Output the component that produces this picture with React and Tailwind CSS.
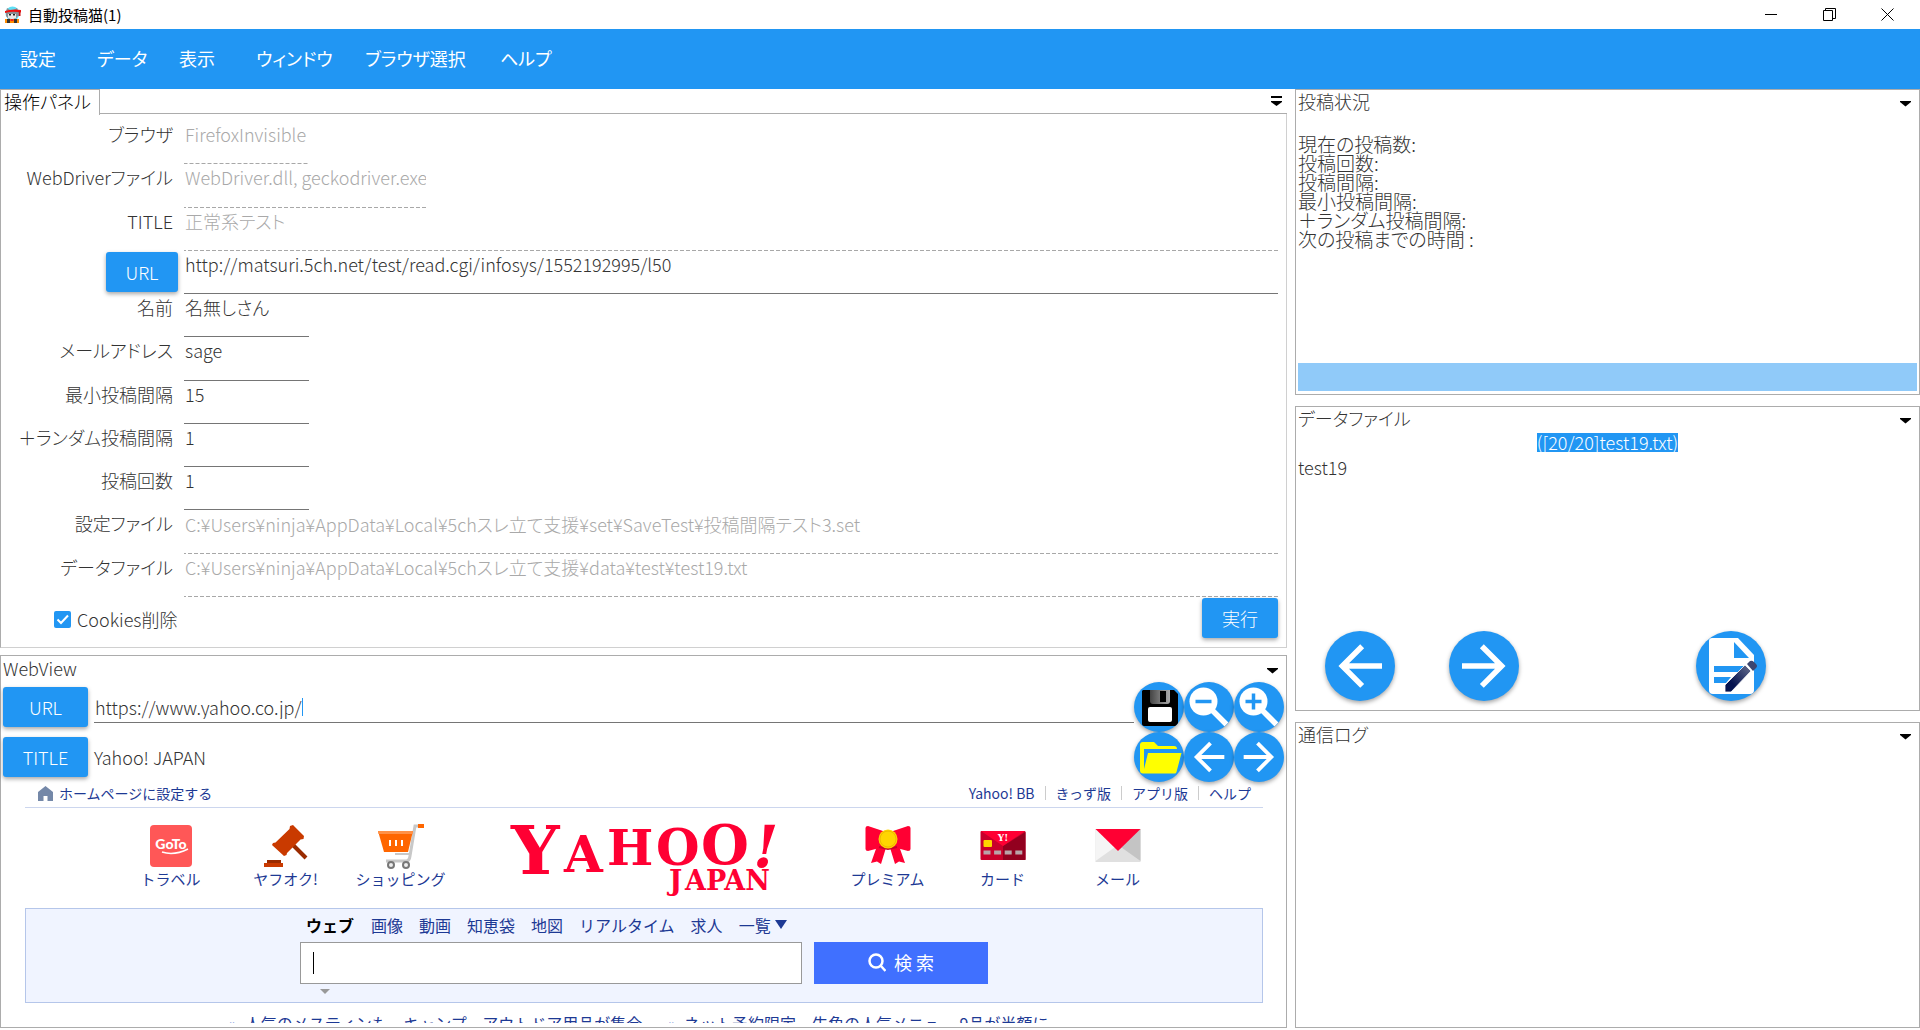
import React from 'react';

const blueShadow = 'shadow-[0_2px_4px_rgba(0,0,0,0.35)]';

function CatIcon() {
  return (
    <svg width="18" height="18" viewBox="0 0 18 18" aria-hidden="true">
      <circle cx="8.500" cy="7.500" r="7" fill="#5fdff5" />
      <path d="M2 6l1-4 3 2h4l3-2 1 4v4l-3 3H5l-3-3z" fill="#8a8f94" />
      <path d="M4 8h8v4l-3 1H7l-3-1z" fill="#e8e8e8" />
      <path d="M1 5Q8 2.500 17 4v2.500Q8 5 1 7z" fill="#ee1111" />
      <path d="M15.500 5v5" stroke="#cc1111" strokeWidth="2" />
      <rect x="5" y="8" width="2" height="1.500" fill="#222" />
      <rect x="9" y="8" width="2" height="1.500" fill="#222" />
      <rect x="1" y="13" width="14" height="4" fill="#ff8c00" />
      <rect x="3" y="13" width="3" height="4" fill="#333" />
      <rect x="10" y="13" width="3" height="4" fill="#333" />
      <rect x="6.500" y="13" width="3" height="2" fill="#e22" />
    </svg>
  );
}

function TitleBar() {
  const btn = 'flex h-full w-[58px] items-center justify-center';
  return (
    <header className="flex h-[29px] shrink-0 items-center pl-1 pr-1">
      <CatIcon />
      <h1 className="ml-[6px] text-[15px] leading-5 text-black">自動投稿猫(1)</h1>
      <div className="ml-auto flex h-full">
        <button className={btn} aria-label="最小化">
          <svg width="12" height="12"><path d="M0 5.500h12" stroke="#000" /></svg>
        </button>
        <button className={btn} aria-label="元に戻す">
          <svg width="13" height="13" fill="none" stroke="#000">
            <path d="M.5 2.500h9v10h-9zM2.500 2.500v-2h10v10h-3" />
          </svg>
        </button>
        <button className={btn} aria-label="閉じる">
          <svg width="13" height="13" stroke="#000"><path d="M.5.5l12 12M12.500.5l-12 12" /></svg>
        </button>
      </div>
    </header>
  );
}

function MenuBar() {
  return (
    <nav className="grid h-[60px] shrink-0 grid-cols-[77px_82px_77px_109px_135px_auto] content-center justify-items-start bg-[#2196f3] pb-[2px] pl-5 text-[18px] leading-7 text-white">
      {['設定', 'データ', '表示', 'ウィンドウ', 'ブラウザ選択', 'ヘルプ'].map((m) => (
        <button key={m}>{m}</button>
      ))}
    </nav>
  );
}

function Caret({ bar }) {
  return (
    <button aria-label="パネルメニュー" className="flex h-4 w-4 items-center justify-center">
      <svg width="11" height="10" fill="#000">
        {bar ? <path d="M0 0h11v2H0zM0 5h11v1L5.500 10 0 6z" /> : <path d="M0 3h11v1L5.500 8.500 0 4z" />}
      </svg>
    </button>
  );
}

const dashed =
  'bg-[linear-gradient(to_right,#a8a8a8_4px,transparent_4px)] bg-[length:6px_1px] bg-bottom bg-repeat-x text-[#a9a9a9] border-b border-transparent bg-origin-border bg-clip-border';
const solid = 'border-b border-[#757575] text-[#333]';

const fields = [
  { id: 'browser', label: 'ブラウザ', value: 'FirefoxInvisible', width: 'w-[125px]', ro: true },
  { id: 'driver', label: 'WebDriverファイル', value: 'WebDriver.dll, geckodriver.exe', width: 'w-[242px]', ro: true },
  { id: 'title', label: 'TITLE', value: '正常系テスト', width: 'w-full', ro: true },
  { id: 'url', label: 'URL', value: 'http://matsuri.5ch.net/test/read.cgi/infosys/1552192995/l50', width: 'w-full', button: true },
  { id: 'name', label: '名前', value: '名無しさん', width: 'w-[125px]' },
  { id: 'mail', label: 'メールアドレス', value: 'sage', width: 'w-[125px]' },
  { id: 'min', label: '最小投稿間隔', value: '15', width: 'w-[125px]' },
  { id: 'rand', label: '＋ランダム投稿間隔', value: '1', width: 'w-[125px]' },
  { id: 'count', label: '投稿回数', value: '1', width: 'w-[125px]' },
  { id: 'set', label: '設定ファイル', value: 'C:¥Users¥ninja¥AppData¥Local¥5chスレ立て支援¥set¥SaveTest¥投稿間隔テスト3.set', width: 'w-full', ro: true },
  { id: 'data', label: 'データファイル', value: 'C:¥Users¥ninja¥AppData¥Local¥5chスレ立て支援¥data¥test¥test19.txt', width: 'w-full', ro: true },
];

function ControlPanel() {
  return (
    <section className="flex min-h-0 flex-[559_1_0%] flex-col">
      <div className="flex h-[25px] shrink-0 items-stretch">
        <h2 className="z-10 -mb-px w-[100px] whitespace-nowrap border border-b-0 border-[#acacac] bg-white pl-[3px] text-[18px] font-light leading-[22px] text-black">操作パネル</h2>
        <div className="flex flex-1 items-center justify-end border-b border-[#acacac] pr-[3px]">
          <Caret bar />
        </div>
      </div>
      <div className="flex min-h-0 flex-1 flex-col border border-t-0 border-[#acacac] border-b-[#d0d0d0] border-r-[#d0d0d0] pt-[7px]">
        <div className="grid min-h-0 flex-1 auto-rows-fr grid-cols-[172px_1fr] gap-x-[11px] pr-2">
          {fields.map((f) => (
            <React.Fragment key={f.id}>
              {f.button ? (
                <div className="flex items-center justify-end">
                  <button className={`-mr-[5px] h-10 w-[72px] rounded-[3px] bg-[#2196f3] text-white ${blueShadow}`}>{f.label}</button>
                </div>
              ) : (
                <label htmlFor={f.id} className="whitespace-nowrap text-right leading-[26px]">{f.label}</label>
              )}
              <input
                id={f.id}
                aria-label={f.label}
                defaultValue={f.value}
                readOnly={f.ro}
                className={`h-full min-h-0 rounded-none pb-4 pl-px outline-none ${f.width} ${f.ro ? dashed : solid}`}
              />
            </React.Fragment>
          ))}
        </div>
        <div className="flex h-[50px] shrink-0 items-start justify-between pl-[53px] pr-2">
          <label className="flex h-11 items-center gap-[6px]">
            <span className="relative flex h-[17px] w-[17px]">
              <input type="checkbox" defaultChecked className="h-[17px] w-[17px] appearance-none rounded-[2px] bg-[#2196f3]" />
              <svg className="pointer-events-none absolute inset-0" width="17" height="17" fill="none" stroke="#fff" strokeWidth="2"><path d="M3.500 8.500l3.500 3.500 7-7.500" /></svg>
            </span>
            Cookies削除
          </label>
          <button className={`mt-px h-10 w-[76px] rounded-[3px] bg-[#2196f3] text-white ${blueShadow}`}>実行</button>
        </div>
      </div>
    </section>
  );
}

function Arrow({ left, size }) {
  return (
    <svg width={size} height={size} viewBox="0 0 24 24" fill="#fff" aria-hidden="true">
      {left ? (
        <path d="M20 11v2H8l5.500 5.500-1.420 1.420L4.160 12l7.920-7.920L13.500 5.500 8 11z" />
      ) : (
        <path d="M4 11v2h12l-5.500 5.500 1.420 1.420L19.840 12l-7.920-7.920L10.500 5.500 16 11z" />
      )}
    </svg>
  );
}

function Magnifier({ plus }) {
  return (
    <svg width="50" height="50" viewBox="0 0 50 50" aria-hidden="true">
      <path d="M27 27l15.500 15.500" stroke="#fff" strokeWidth="5.500" />
      <circle cx="19.500" cy="19.500" r="14" fill="#fff" />
      <path d="M11.500 19.500h16" stroke="#2196f3" strokeWidth="3.500" />
      {plus && <path d="M19.500 11.500v16" stroke="#2196f3" strokeWidth="3.500" />}
    </svg>
  );
}

function Floppy() {
  return (
    <svg width="50" height="50" viewBox="0 0 50 50" aria-hidden="true">
      <defs>
        <linearGradient id="shutter"><stop offset="0" stopColor="#444" /><stop offset="1" stopColor="#aaa" /></linearGradient>
      </defs>
      <path d="M9 8h31l4 4v30a2 2 0 0 1-2 2H10a2 2 0 0 1-2-2V9z" fill="#000" />
      <path d="M16 8h20v11a3 3 0 0 1-3 3H19a3 3 0 0 1-3-3z" fill="url(#shutter)" />
      <rect x="26" y="9" width="6" height="11" fill="#000" />
      <rect x="14" y="25" width="24" height="15" rx="2" fill="#fff" />
    </svg>
  );
}

function Folder() {
  return (
    <svg width="50" height="50" viewBox="0 0 50 50" fill="#ff0" aria-hidden="true">
      <path d="M6 13a3 3 0 0 1 3-3h11l4 4h16a3 3 0 0 1 3 3H10v20L14 21h33.500l-5 19a2 2 0 0 1-2 1.500H9a3 3 0 0 1-3-3z" />
    </svg>
  );
}

function RoundButton({ label, children, big }) {
  return (
    <button aria-label={label} className={`flex items-center justify-center overflow-hidden rounded-full bg-[#2196f3] ${blueShadow} ${big ? 'h-[70px] w-[70px]' : 'h-[50px] w-[50px]'}`}>
      {children}
    </button>
  );
}

function TravelIcon() {
  return (
    <svg width="46" height="46" viewBox="0 0 46 46" aria-hidden="true">
      <rect x="2" y="2" width="42" height="42" rx="4" fill="#ff5757" />
      <text x="23" y="26" textAnchor="middle" fontFamily="Lato, sans-serif" fontWeight="900" fontSize="14" fill="#fff">GoTo</text>
      <path d="M14 29q12 4 26-3" fill="none" stroke="#fff" strokeWidth="1.500" />
    </svg>
  );
}

function GavelIcon() {
  return (
    <svg width="46" height="46" viewBox="0 0 46 46" aria-hidden="true">
      <path d="M27 19l16 16" stroke="#9a2b00" strokeWidth="4" />
      <path d="M10 20l2.500-.5L26.500 6l.5-3L30 2l11 11-.5 3-3 .5L24 30l-.5 2-2.500 1L9 22z" fill="#c93a00" />
      <path d="M4 37h14v3H4z" fill="#9a2b00" />
      <path d="M1 40h19v4H1z" fill="#c93a00" />
    </svg>
  );
}

function CartIcon() {
  return (
    <svg width="46" height="46" viewBox="0 0 46 46" aria-hidden="true">
      <path d="M45 3h-8L32 33q-.5 5-4 5H8" fill="none" stroke="#c8c8c8" strokeWidth="3" />
      <path d="M17 31h14" stroke="#c8c8c8" strokeWidth="2" />
      <path d="M40 1h6v4h-6z" fill="#ff6600" />
      <path d="M0 8h35l-5 21H6z" fill="#ff6600" />
      <path d="M0 8h35l-.5 3H.5z" fill="#ff9147" />
      <path d="M12 17v6M18 17v6M24 17v6" stroke="#fff" strokeWidth="2" />
      <circle cx="13" cy="42" r="3" fill="#eee" stroke="#777" strokeWidth="2" />
      <circle cx="28" cy="42" r="3" fill="#eee" stroke="#777" strokeWidth="2" />
    </svg>
  );
}

function RibbonIcon() {
  return (
    <svg width="46" height="46" viewBox="0 0 46 46" fill="#ff0033" aria-hidden="true">
      <path d="M12 23h9.500L16 41l-4-2.500L6 40zM34 23h-9.500L30 41l4-2.500 6 1.500z" />
      <path d="M.5 5q0-2 2.500-2l15 5v16L3 28q-2.500 0-2.500-2zM45.500 5q0-2-2.500-2L28 8v16l15 4q2.500 0 2.500-2z" />
      <path d="M14 24l9 2 9-2" fill="none" stroke="#c8002a" strokeWidth="2" />
      <circle cx="23" cy="16" r="9.500" fill="#ffd500" />
      <circle cx="23" cy="16" r="8" fill="none" stroke="#eeb800" />
    </svg>
  );
}

function CardIcon() {
  return (
    <svg width="46" height="46" viewBox="0 0 46 46" aria-hidden="true">
      <rect x=".5" y="8" width="45" height="29" rx="1" fill="#c9002b" />
      <path d="M23 23L45.500 9v28H23z" fill="#92001f" />
      <path d="M1 8h44L23 23z" fill="#ff0033" />
      <text x="23" y="18" textAnchor="middle" fontFamily="DejaVu Serif, serif" fontWeight="700" fontSize="9" fill="#fff">Y!</text>
      <rect x="3.500" y="17" width="8.500" height="7" rx="1" fill="#ffd500" />
      <path d="M3.500 29.500h39" stroke="#b9a3a8" strokeWidth="4" strokeDasharray="7 3.600" />
    </svg>
  );
}

function MailIcon() {
  return (
    <svg width="46" height="46" viewBox="0 0 46 46" aria-hidden="true">
      <rect x=".5" y="6" width="45" height="33" fill="#e0e0e0" />
      <path d="M.5 6v32L23 22z" fill="#f5f5f5" />
      <path d="M45.500 6v32L23 22z" fill="#c4c4c4" />
      <path d="M.5 6h45L23 28z" fill="#ff0033" />
    </svg>
  );
}

function YahooLogo() {
  return (
    <svg width="268" height="74" viewBox="0 0 268 74" className="overflow-visible" fill="#ff0033" fontFamily="DejaVu Serif, serif" fontWeight="700" role="img" aria-label="Yahoo! JAPAN">
      <text y="51" fontSize="68" x="1">Y</text>
      <text y="49" fontSize="50" x="54">A</text>
      <text y="42" fontSize="49" x="97">H</text>
      <text y="42" fontSize="50" x="146">O</text>
      <text y="41" fontSize="55" x="191">O</text>
      <text y="44" fontSize="58" x="243" fontStyle="italic">!</text>
      <text y="67" fontSize="28" x="159">J</text>
      <text y="67" fontSize="27" x="175">APAN</text>
    </svg>
  );
}

function Shortcut({ icon, label }) {
  return (
    <a href="#" className="flex w-[115px] flex-col items-center">
      {icon}
      <span className="text-[15px] leading-5">{label}</span>
    </a>
  );
}

function YahooPage() {
  return (
    <div className="min-h-0 flex-1 overflow-hidden pl-[22px] pr-[21px] font-normal text-[#1d3994] [font-feature-settings:normal]">
      <div className="flex h-[26px] items-start border-b border-[#ccd6ee] pl-[13px] pr-3 text-[14px] leading-[22px]">
        <svg className="mt-1" width="15" height="15" viewBox="0 0 15 15" fill="#7488a8" aria-hidden="true"><path d="M7.500 0L15 6v9H9.500v-5h-4v5H0V6z" /></svg>
        <a href="#" className="ml-[6px]">ホームページに設定する</a>
        <div className="ml-auto mt-1 flex items-center divide-x divide-[#ccc] leading-[14px]">
          {['Yahoo! BB', 'きっず版', 'アプリ版', 'ヘルプ'].map((l) => (
            <a key={l} href="#" className="px-[10px] last:pr-0">{l}</a>
          ))}
        </div>
      </div>
      <div className="flex h-[100px] justify-center pt-[15px]">
        <Shortcut icon={<TravelIcon />} label="トラベル" />
        <Shortcut icon={<GavelIcon />} label="ヤフオク!" />
        <Shortcut icon={<CartIcon />} label="ショッピング" />
        <div className="flex w-[372px] justify-center"><YahooLogo /></div>
        <Shortcut icon={<RibbonIcon />} label="プレミアム" />
        <Shortcut icon={<CardIcon />} label="カード" />
        <Shortcut icon={<MailIcon />} label="メール" />
      </div>
      <form className="h-[95px] border border-[#b5c6ea] bg-[#f0f4ff] pl-[274px]" onSubmit={(e) => e.preventDefault()}>
        <div className="flex h-[33px] items-center gap-4 whitespace-nowrap pb-[2px] pl-[6px] text-[16px]">
          <b className="mr-px text-black">ウェブ</b>
          {['画像', '動画', '知恵袋', '地図', 'リアルタイム', '求人'].map((t) => (
            <a key={t} href="#">{t}</a>
          ))}
          <a href="#" className="flex items-center gap-1">
            一覧
            <svg width="12" height="9" fill="#1d3994"><path d="M0 0h12L6 9z" /></svg>
          </a>
        </div>
        <div className="flex gap-3">
          <label className="flex h-[42px] w-[502px] items-center border border-[#999] bg-white pl-3">
            <span className="h-[22px] w-px bg-black" />
            <input aria-label="検索キーワード" className="h-full flex-1 outline-none" />
          </label>
          <button className="flex h-[42px] w-[174px] items-center justify-center gap-2 bg-[#4070ff] pb-[2px] text-[18px] text-white">
            <svg width="18" height="19" viewBox="0 0 18 19" fill="none" stroke="#fff" strokeWidth="2.500" aria-hidden="true"><circle cx="8" cy="8" r="6.500" /><path d="M12.500 12.500l5 5.500" /></svg>
            検 索
          </button>
        </div>
        <svg className="ml-5 mt-[5px]" width="10" height="5" fill="#999"><path d="M0 0h10L5 5z" /></svg>
      </form>
      <p className="flex gap-[26px] whitespace-nowrap pl-[204px] pt-2 text-[16px] leading-6">
        <a href="#" className="flex gap-2"><span className="text-[#7f9be0]">»</span>人気のメスティンも、キャンプ、アウトドア用品が集合</a>
        <a href="#" className="flex gap-2"><span className="text-[#7f9be0]">»</span>ネット予約限定、牛角の人気メニュー 9品が半額に</a>
      </p>
    </div>
  );
}

function WebView() {
  const btn = `h-10 w-[85px] rounded-[3px] bg-[#2196f3] text-white ${blueShadow}`;
  return (
    <section className="flex min-h-0 flex-[367_1_0%] flex-col border border-[#acacac] px-[2px] pb-1">
      <div className="flex h-[26px] shrink-0 items-start justify-between pr-1">
        <h2>WebView</h2>
        <span className="mt-[6px]"><Caret /></span>
      </div>
      <div className="flex h-[100px] shrink-0">
        <div className="grid flex-1 grid-cols-[85px_1fr] grid-rows-2 items-center gap-x-[6px]">
          <button className={btn}>URL</button>
          <div className="flex h-8 items-center border-b border-[#757575] pl-px">
            <input aria-label="WebView URL" defaultValue="https://www.yahoo.co.jp/" className="outline-none [field-sizing:content]" />
            <span className="h-[18px] w-px bg-[#2196f3]" />
          </div>
          <button className={btn}>TITLE</button>
          <span>Yahoo! JAPAN</span>
        </div>
        <div className="grid grid-cols-3">
          <RoundButton label="保存"><Floppy /></RoundButton>
          <RoundButton label="縮小"><Magnifier /></RoundButton>
          <RoundButton label="拡大"><Magnifier plus /></RoundButton>
          <RoundButton label="開く"><Folder /></RoundButton>
          <RoundButton label="戻る"><Arrow left size={46} /></RoundButton>
          <RoundButton label="進む"><Arrow size={46} /></RoundButton>
        </div>
      </div>
      <YahooPage />
    </section>
  );
}

function SidePanel({ title, children }) {
  return (
    <section className="flex min-h-0 flex-1 flex-col border border-[#acacac] px-[2px] pb-[3px]">
      <div className="flex h-[25px] shrink-0 items-start justify-between pr-1">
        <h2 className="leading-[23px]">{title}</h2>
        <span className="mt-[5px]"><Caret /></span>
      </div>
      {children}
    </section>
  );
}

function EditIcon() {
  return (
    <svg width="70" height="70" viewBox="0 0 70 70" aria-hidden="true">
      <defs>
        <linearGradient id="pen" x1="0" y1="1" x2="1" y2="0"><stop offset=".3" stopColor="#04124f" /><stop offset="1" stopColor="#6a7290" /></linearGradient>
      </defs>
      <path d="M16 7h26l16 17v35a4 4 0 0 1-4 4H17a4 4 0 0 1-4-4V10a3 3 0 0 1 3-3z" fill="#fff" />
      <path d="M38 11l15 16H38zM18 35h31l-5 6H18zM18 46h17l-5 6H18z" fill="#2196f3" />
      <path d="M29 54l20-20 6 6-20 21h-6z" fill="url(#pen)" stroke="#fff" strokeWidth=".8" />
      <path d="M51 33l3-3q2-1 4 1l2 2q2 2 0 4l-3 3z" fill="#3d4670" />
    </svg>
  );
}

export default function App() {
  return (
    <div className="flex h-screen flex-col overflow-hidden bg-white pb-[2px] text-[18px] leading-6 text-[#333] [font-family:'Noto_Sans_CJK_JP',sans-serif]">
      <TitleBar />
      <div className="contents [font-feature-settings:'palt']">
        <MenuBar />
        <main className="flex min-h-0 flex-1 gap-2 font-light">
          <div className="flex min-w-0 flex-[1287_1_0%] flex-col gap-[7px]">
            <ControlPanel />
            <WebView />
          </div>
          <aside className="flex min-w-0 flex-[625_1_0%] flex-col gap-[11px]">
            <SidePanel title="投稿状況">
              <div className="flex-1 pt-[19px] text-[19px] leading-[19px]">
                {['現在の投稿数:', '投稿回数:', '投稿間隔:', '最小投稿間隔:', '＋ランダム投稿間隔:', '次の投稿までの時間 :'].map((l) => (
                  <p key={l}>{l}</p>
                ))}
              </div>
              <div role="progressbar" aria-label="進捗" className="h-7 bg-[#90caf9]" />
            </SidePanel>
            <SidePanel title="データファイル">
              <p className="text-center leading-5"><mark className="inline-block h-[19px] bg-[#2196f3] leading-[19px] text-white">([20/20]test19.txt)</mark></p>
              <p className="flex-1 pt-[3px]">test19</p>
              <div className="mb-[6px] grid grid-cols-5 justify-items-center">
                <RoundButton big label="前へ"><Arrow left size={66} /></RoundButton>
                <RoundButton big label="次へ"><Arrow size={66} /></RoundButton>
                <span />
                <RoundButton big label="編集"><EditIcon /></RoundButton>
              </div>
            </SidePanel>
            <SidePanel title="通信ログ" />
          </aside>
        </main>
      </div>
    </div>
  );
}
